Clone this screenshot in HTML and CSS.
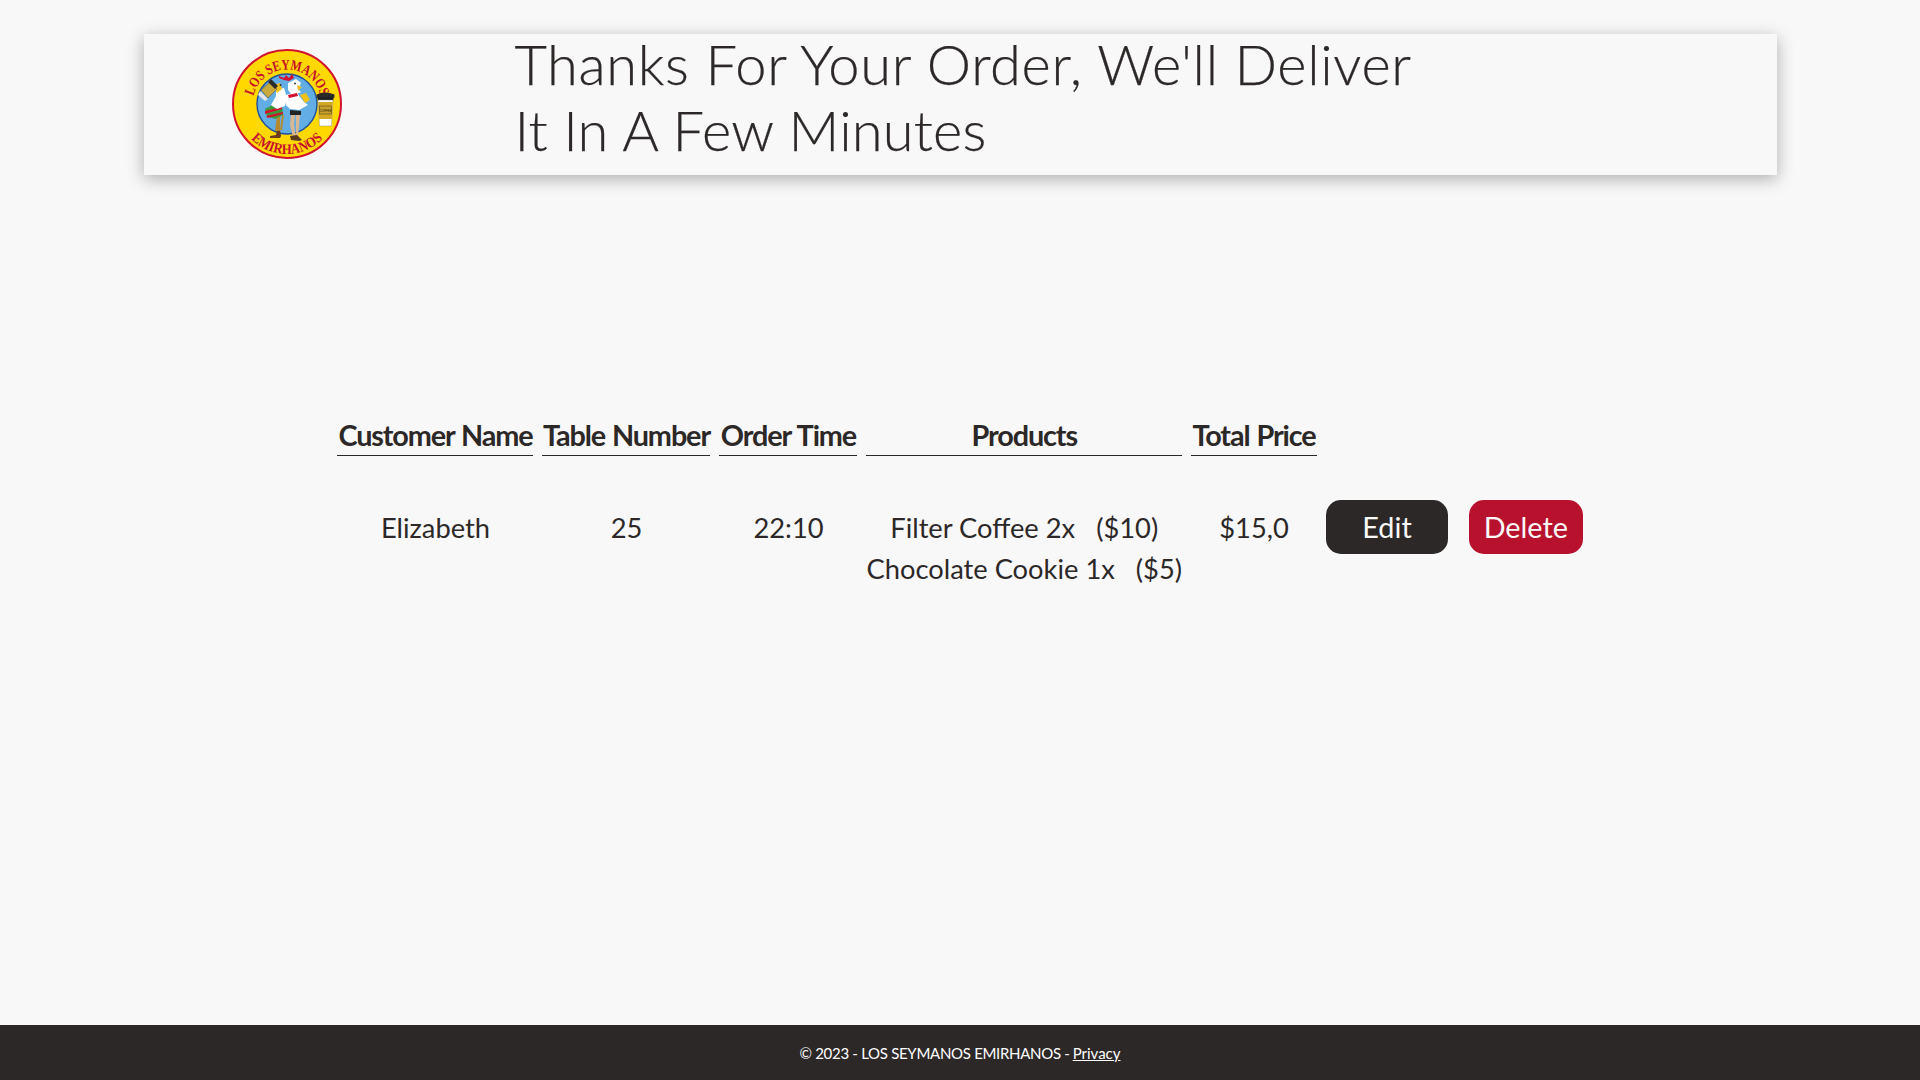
FILE: index.html
```html
<!DOCTYPE html>
<html lang="en">
<head>
<meta charset="utf-8">
<title>Los Seymanos Emirhanos</title>
<link rel="stylesheet" href="styles.css">
</head>
<body>
<header class="banner">
  <div class="logo-col">
    <svg class="logo" viewBox="0 0 110 110" width="110" height="110" aria-label="Los Seymanos Emirhanos logo">
      <defs>
        <path id="arcTop" d="M 20.500 55 A 34.500 34.500 0 0 1 89.500 55"/>
        <path id="arcBottom" d="M 5 55 A 50 50 0 0 0 105 55"/>
      </defs>
      <circle cx="55" cy="55" r="54" fill="#ffd800" stroke="#d2122e" stroke-width="2"/>
      <circle cx="55" cy="55" r="30" fill="#62ade4" stroke="#1f4f9c" stroke-width="1.4"/>
      <text class="logo-text"><textPath href="#arcTop" startOffset="50%" text-anchor="middle" textLength="92" lengthAdjust="spacingAndGlyphs">LOS SEYMANOS</textPath></text>
      <text class="logo-text"><textPath href="#arcBottom" startOffset="50%" text-anchor="middle" textLength="80" lengthAdjust="spacingAndGlyphs">EMIRHANOS</textPath></text>
      <!-- left chicken: boots, legs, poncho -->
      <path d="M38 87l6-1 1-5 3 0 1 6-1 2-10 0z" fill="#6b3d1c"/>
      <path d="M43 82l2-16 3 0 0 16zM48 81l2-15 2 0-2 15z" fill="#b48a2e"/>
      <path d="M33 60l11-6 6 2 1 10-8 4-8-3z" fill="#3d9a3a"/>
      <path d="M33 62l17-4 0 2-17 5zM34 67l17-4 0 2-15 4z" fill="#d2122e"/>
      <path d="M44 41l8-2 3 10-2 8-8 3-6-4 5-9z" fill="#fff"/>
      <path d="M41 36l7-2 2 6-5 4z" fill="#f2c21a"/>
      <!-- can -->
      <path d="M29 41l9-8 7 7-9 9z" fill="#c9a93a" stroke="#555" stroke-width=".6"/>
      <path d="M36 33l3-3 7 7-3 3z" fill="#2b2b2b"/>
      <path d="M28 42l8 8-3 2-7-6z" fill="#e6e6e6"/>
      <!-- right chicken: legs, shoes, dress, tail -->
      <path d="M59 66l4 0-1 10 2 12-3 0-3-12zM64 66l4 0-1 11-1 11-2 0 0-12z" fill="#d8b894"/>
      <path d="M58 61l11 1 0 4-11 0z" fill="#222"/>
      <path d="M58 87l7-1 5 5-3 1-8-1z" fill="#5c3a20"/>
      <path d="M54 46l10-3 8 10 4 3-9 5-9-1-4-4z" fill="#fff"/>
      <path d="M68 46l6-2 4 7-5 3z" fill="#f2c21a"/>
      <path d="M56 34l8-4 5 4-3 6 3 3-8 4-5-6z" fill="#fff"/>
      <path d="M65 36l5 2-4 4z" fill="#f2c21a"/>
      <path d="M47 27l5 2 2-3 3 3 3-4 2 4-5 3-5-1-5-2z" fill="#d2122e"/>
      <path d="M56 46l9-2 1 3-9 2z" fill="#d2122e"/>
      <circle cx="48.500" cy="36" r=".9" fill="#222"/>
      <circle cx="63" cy="34.500" r=".9" fill="#222"/>
      <!-- coffee cup -->
      <path d="M85 47h17l-1 5H86z" fill="#1d1d1d"/>
      <path d="M84.500 45.500q8.500-4 18 0v3h-18z" fill="#2a2a2a"/>
      <path d="M86 51h15l-1.500 26h-12z" fill="#ffffff" stroke="#777" stroke-width=".4"/>
      <path d="M86.200 53h14.600l-1 17H87.200z" fill="#d2a924"/>
      <rect x="87.500" y="57" width="12" height="8" fill="#c7a02a" stroke="#4a3a12" stroke-width=".5"/>
      <text class="cup-text" x="93.500" y="62.700" text-anchor="middle">COFFEE</text>
    </svg>
  </div>
  <h1 class="headline"><span class="line line-long">Thanks For Your Order, We'll Deliver</span><span class="line line-short">It In A Few Minutes</span></h1>
</header>

<main class="content">
  <table class="orders">
    <thead>
      <tr>
        <th class="col-name">Customer Name</th>
        <th class="col-table">Table Number</th>
        <th class="col-time">Order Time</th>
        <th class="col-products">Products</th>
        <th class="col-total">Total Price</th>
      </tr>
    </thead>
    <tbody>
      <tr>
        <td>Elizabeth</td>
        <td>25</td>
        <td>22:10</td>
        <td class="products">
          <div>Filter Coffee 2x &nbsp; ($10)</div>
          <div>Chocolate Cookie 1x &nbsp; ($5)</div>
        </td>
        <td>$15,0</td>
        <td class="action"><button class="btn btn-edit" type="button">Edit</button></td>
        <td class="action"><button class="btn btn-delete" type="button">Delete</button></td>
      </tr>
    </tbody>
  </table>
</main>

<footer class="site-footer"><span>© 2023 - LOS SEYMANOS EMIRHANOS -</span><a href="#">Privacy</a></footer>
</body>
</html>
```
FILE: styles.css
```css
* { box-sizing: border-box; }
html, body { margin: 0; height: 100%; }
body {
  min-height: 100vh;
  display: flex;
  flex-direction: column;
  background: #f8f8f8;
  color: #2d2828;
  font-family: Lato, "Liberation Sans", sans-serif;
}
.banner {
  width: 1633px;
  height: 141px;
  margin: 34px auto 0;
  display: flex;
  background: #f8f8f8;
  box-shadow: 0 4px 16px rgba(0, 0, 0, 0.3);
}
.logo-col {
  width: 371px;
  flex: none;
  padding: 15px 0 0 88px;
}
.logo { display: block; }
.logo-text {
  font-family: "Liberation Serif", serif;
  font-weight: 700;
  font-size: 14.500px;
  fill: #c8102e;
}
.cup-text {
  font-family: "Liberation Sans", sans-serif;
  font-size: 3px;
  fill: #2b2208;
}
.headline {
  margin: -3px 0 0;
  font-family: Lato, sans-serif;
  font-weight: 300;
  font-size: 56px;
  line-height: 66px;
  -webkit-text-stroke: 0.25px #2d2828;
}
.line { display: block; }
.line-long { letter-spacing: 0.66px; }
.line-short { letter-spacing: 0.2px; }
.content {
  flex: 1;
  display: flex;
  justify-content: center;
  align-items: flex-start;
  padding-top: 232px;
}
.orders {
  border-spacing: 9.6px 9.6px;
  font-size: 27.300px;
  line-height: 41px;
}
.orders th {
  padding: 0;
  font-size: 28.800px;
  line-height: 39px;
  font-weight: 700;
  letter-spacing: -1.100px;
  word-spacing: 1px;
  border-bottom: 1.6px solid #2d2828;
  white-space: nowrap;
}
.col-name { width: 196px; }
.col-table { width: 168px; }
.col-time { width: 138px; }
.col-products { width: 315px; }
.col-total { width: 126px; }
.orders tbody::before {
  content: "";
  display: block;
  height: 32.500px;
}
.orders td {
  padding: 0;
  text-align: center;
  vertical-align: top;
  white-space: nowrap;
}
.orders .action { line-height: 0; }
.btn {
  height: 54px;
  margin-top: -6.500px;
  border: 0;
  border-radius: 15px;
  color: #f8f8f8;
  font-family: Lato, sans-serif;
  font-size: 28.800px;
  font-weight: 400;
}
.btn-edit { width: 122px; background: #2d2828; }
.btn-delete { width: 113.500px; background: #b8112e; margin-left: 12px; }
.site-footer {
  height: 55px;
  flex: none;
  display: flex;
  align-items: center;
  justify-content: center;
  gap: 3px;
  background: #2d2828;
  color: #fff;
  font-size: 15px;
  letter-spacing: -0.3px;
}
.site-footer a { color: #fff; letter-spacing: 0; }
```
